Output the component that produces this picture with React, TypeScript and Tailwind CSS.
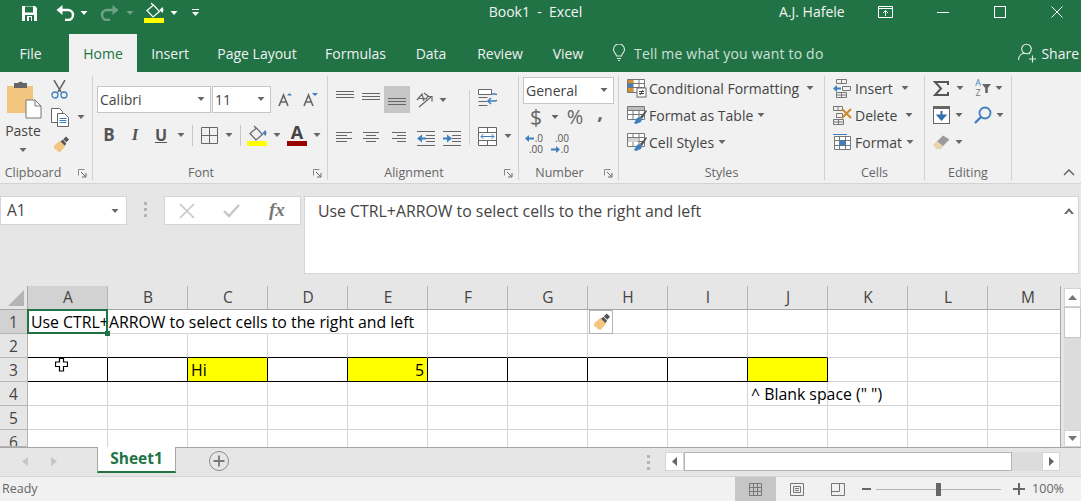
import type { ReactNode } from 'react';

const FONT = "font-['Open_Sans','Noto_Sans',sans-serif]";

function Caret({ light = false, className = '' }: { light?: boolean; className?: string }) {
  return (
    <svg width="8" height="4" viewBox="0 0 8 4" className={`shrink-0 ${className}`}>
      <path d="M0.5 0h7L4 4z" fill={light ? '#ffffff' : '#666666'} />
    </svg>
  );
}

function Launcher() {
  return (
    <svg width="9" height="9" viewBox="0 0 9 9" className="shrink-0">
      <path d="M0.5 0.5h6M0.5 0.5v6" stroke="#8a8a8a" fill="none" />
      <path d="M3 3l4.5 4.5M8 4v4H4" stroke="#666666" fill="none" />
    </svg>
  );
}

function Group({ className, label, launcher = false, labelClass = '', children }: { className: string; label: string; launcher?: boolean; labelClass?: string; children: ReactNode }) {
  return (
    <div className={`mt-[4px] h-[104px] shrink-0 flex flex-col border-r border-[#d0d0d0] ${className}`}>
      <div className="h-[88px] flex">{children}</div>
      <div className="h-[16px] pt-[2px] flex items-center">
        <div className={`flex-1 text-center text-[12.5px] leading-none text-[#666666] ${labelClass}`}>{label}</div>
        {launcher && (
          <div className="w-[16px] mr-[2px] flex justify-center">
            <Launcher />
          </div>
        )}
      </div>
    </div>
  );
}

function Lines({ widths, gap = 3, x = 0 }: { widths: number[]; gap?: number; x?: number }) {
  return (
    <svg width="18" height="16" viewBox="0 0 18 16">
      {widths.map((w, i) => (
        <rect key={i} x={x === 0 ? 0 : x === 1 ? (18 - w) / 2 : 18 - w} y={1 + i * gap} width={w} height="1" fill="#666666" />
      ))}
    </svg>
  );
}

function PaintBucket({ bar, outline = '#ffffff', drop = '#ffffff' }: { bar: string; outline?: string; drop?: string }) {
  return (
    <svg width="20" height="21" viewBox="0 0 20 21">
      <path d="M7 1l2 2M3 8.5L9.5 3l6 6.5-6.5 5.5z" fill="none" stroke={outline} strokeWidth="1.2" />
      <path d="M15.5 8l3-3 1 3-1 3z" fill={drop} />
      <rect x="0" y="16" width="20" height="5" fill={bar} />
    </svg>
  );
}

function Brush({ size = 20 }: { size?: number }) {
  return (
    <svg width={size} height={size} viewBox="0 0 20 20">
      <path d="M2 11l7-6 6 6-6 7-3-1-1-2-2 0z" fill="#f2c67f" />
      <path d="M9.5 6l2.5-2 4 4.5-2 2z" fill="#555555" />
      <path d="M12.5 3.5l3-3 3.5 3.5-3 3z" fill="#555555" />
    </svg>
  );
}

function TableIcon({ children }: { children?: ReactNode }) {
  return (
    <svg width="20" height="20" viewBox="0 0 20 20">
      <path d="M0.5 1.5h17v13h-17zM0.5 5.5h17M0.5 9.5h17M6 1.5v13M12 1.5v13" fill="#ffffff" stroke="#777777" />
      {children}
    </svg>
  );
}

function TitleBar() {
  return (
    <div className="h-[34px] pb-[6px] flex items-center text-white relative">
      <div className="w-[21px]" />
      <svg width="17" height="17" viewBox="0 0 17 17" className="mb-[8px] mt-[6px]">
        <path d="M1 1h13l2 2v13H1z" fill="#ffffff" />
        <rect x="4" y="1.5" width="8" height="6" fill="#217346" />
        <rect x="4" y="10" width="9" height="6" fill="#217346" />
        <rect x="6" y="11" width="5" height="5" fill="#ffffff" />
        <rect x="8" y="12" width="2" height="4" fill="#217346" />
      </svg>
      <svg width="20" height="16" viewBox="0 0 20 16" className="ml-[18px] mb-[2px]">
        <path d="M3 5h9a5 5 0 0 1 0 10h-3" fill="none" stroke="#ffffff" strokeWidth="2.4" />
        <path d="M0.5 5l6-5v10z" fill="#ffffff" />
      </svg>
      <Caret light className="ml-[4px] mb-[2px]" />
      <svg width="20" height="16" viewBox="0 0 20 16" className="ml-[11px] mb-[2px]">
        <path d="M17 5H8a5 5 0 0 0 0 10h3" fill="none" stroke="#6fa288" strokeWidth="2.4" />
        <path d="M19.5 5l-6-5v10z" fill="#6fa288" />
      </svg>
      <svg width="8" height="4" viewBox="0 0 8 4" className="ml-[7px] mb-[2px]">
        <path d="M0.5 0h7L4 4z" fill="#6fa288" />
      </svg>
      <div className="ml-[10px] mb-[3px]">
        <PaintBucket bar="#ffff00" />
      </div>
      <Caret light className="ml-[6px] mb-[3px]" />
      <svg width="7" height="7" viewBox="0 0 7 7" className="ml-[14px] mb-[3px]">
        <path d="M0 0h7v1H0z M0 3h7L3.5 7z" fill="#ffffff" />
      </svg>
      <div className="w-[281px] ml-[196px] mb-[6px] text-center text-[14px] whitespace-pre text-[#f4f4f4] shrink-0">Book1  -  Excel</div>
      <div className="absolute left-[779px] top-[1px] text-[14px] text-[#f4f4f4]">A.J. Hafele</div>
      <div className="absolute left-[878px] top-[6px] flex items-center">
        <svg width="15" height="12" viewBox="0 0 15 12">
          <path d="M0.5 0.5h14v11h-14zM0.5 2.5h14M7.5 10V4.5M5 7l2.5-2.5L10 7" fill="none" stroke="#ffffff" />
        </svg>
        <svg width="12" height="1" viewBox="0 0 12 1" className="ml-[44px]">
          <rect width="12" height="1" fill="#ffffff" />
        </svg>
        <svg width="12" height="12" viewBox="0 0 12 12" className="ml-[45px]">
          <rect x="0.5" y="0.5" width="11" height="11" fill="none" stroke="#ffffff" />
        </svg>
        <svg width="12" height="12" viewBox="0 0 12 12" className="ml-[45px]">
          <path d="M0.5 0.5l11 11M11.5 0.5l-11 11" stroke="#ffffff" fill="none" />
        </svg>
      </div>
    </div>
  );
}

function TabsRow() {
  return (
    <div className="h-[38px] flex text-[14px] text-[#f1f1f1]">
      <div className="w-[61px] text-center pt-[9px]">File</div>
      <div className="w-[68px] ml-[8px] pt-[9px] text-center bg-[#f1f1f1] text-[#217346]">Home</div>
      <div className="w-[66px] text-center pt-[9px]">Insert</div>
      <div className="w-[108px] text-center pt-[9px]">Page Layout</div>
      <div className="w-[89px] text-center pt-[9px]">Formulas</div>
      <div className="w-[62px] text-center pt-[9px]">Data</div>
      <div className="w-[76px] text-center pt-[9px]">Review</div>
      <div className="w-[60px] text-center pt-[9px]">View</div>
      <div className="ml-[14px] pt-[9px] flex items-start">
        <svg width="14" height="18" viewBox="0 0 14 18" className="mt-[1px]">
          <path d="M4.5 12c0-2-3-3.500-3-6.500a5.500 5.500 0 0 1 11 0c0 3-3 4.500-3 6.500zM5 14.500h4M6 16.500h2" fill="none" stroke="#dfeae4" strokeWidth="1.1" />
        </svg>
        <span className="ml-[8px] tracking-[0.2px] text-[#cfe0d6]">Tell me what you want to do</span>
      </div>
      <div className="ml-auto flex items-start pt-[9px] pr-[2px]">
        <svg width="19" height="20" viewBox="0 0 19 20">
          <circle cx="8.500" cy="6" r="4.800" fill="none" stroke="#e8f0eb" strokeWidth="1.1" />
          <path d="M0.500 17c0-4 3-6.500 6-7M11 10.500l1 0.500M11 16h7M14.500 12.500v7" fill="none" stroke="#e8f0eb" strokeWidth="1.1" />
        </svg>
        <span className="ml-[4px]">Share</span>
      </div>
    </div>
  );
}

function ClipboardGroup() {
  return (
    <Group className="w-[93px]" label="Clipboard" launcher labelClass="pr-[8px]">
      <div className="w-[46px] flex flex-col items-center">
        <svg width="36" height="40" viewBox="0 0 36 40" className="mt-[4px] ml-[1px]">
          <path d="M1 6h26v27H1z" fill="#f2c67f" />
          <path d="M8 3h4a3 3 0 0 1 5 0h4v5H8z" fill="#666666" />
          <path d="M20 20h9l6 6v12H20z" fill="#ffffff" stroke="#777777" />
          <path d="M29 20v6h6" fill="none" stroke="#777777" />
        </svg>
        <div className="text-[14px] text-[#444444] mt-[1px] leading-[20px]">Paste</div>
        <Caret className="mt-[7px]" />
      </div>
      <div className="flex flex-col -mt-px">
        <div className="h-[28px] flex items-center pl-[5px]">
          <svg width="17" height="19" viewBox="0 0 17 19">
            <path d="M3 0l7 12M14 0L7 12" stroke="#666666" strokeWidth="1.500" fill="none" />
            <circle cx="4" cy="15" r="3" fill="none" stroke="#3f7fbf" strokeWidth="1.300" />
            <circle cx="13" cy="15" r="3" fill="none" stroke="#3f7fbf" strokeWidth="1.300" />
          </svg>
        </div>
        <div className="h-[28px] flex items-center pl-[5px]">
          <svg width="18" height="19" viewBox="0 0 18 19">
            <path d="M0.500 0.500h8l3 3v11h-11z" fill="#ffffff" stroke="#666666" />
            <path d="M6.500 5.500h7l4 4v9h-11z" fill="#ffffff" stroke="#666666" />
            <path d="M8.500 10.500h7M8.500 12.500h7M8.500 14.500h7" stroke="#3f7fbf" />
          </svg>
          <Caret className="ml-[8px]" />
        </div>
        <div className="h-[28px] flex items-center pl-[6px]">
          <Brush size={18} />
        </div>
      </div>
    </Group>
  );
}

function Combo({ className, text }: { className: string; text: string }) {
  return (
    <div className={`h-[27px] bg-white border border-[#c6c6c6] flex items-center text-[14px] text-[#444444] pl-[2px] pr-[5px] pb-px ${className}`}>
      <span className="flex-1">{text}</span>
      <Caret />
    </div>
  );
}

function FontGroup() {
  return (
    <Group className="w-[235px]" label="Font" launcher>
      <div className="flex flex-col pl-[3px]">
        <div className="flex items-center mt-[10px] h-[27px]">
          <Combo className="w-[114px] ml-[1px]" text="Calibri" />
          <Combo className="w-[59px] ml-[1px]" text="11" />
          <svg width="16" height="14" viewBox="0 0 16 14" className="ml-[7px]">
            <path d="M1 13L5.500 2 10 13M3 9h5" fill="none" stroke="#666666" strokeWidth="1.600" />
            <path d="M9 2.500l2.500-2.500 2.500 2.500z" fill="#3f7fbf" />
          </svg>
          <svg width="16" height="14" viewBox="0 0 16 14" className="ml-[9px]">
            <path d="M1 13L5.500 2 10 13M3 9h5" fill="none" stroke="#666666" strokeWidth="1.600" />
            <path d="M9 0h6l-3 3z" fill="#3f7fbf" />
          </svg>
        </div>
        <div className="flex items-center mt-[11px] h-[22px]">
          <div className="w-[26px] text-center text-[17px] font-bold text-[#555555]">B</div>
          <div className="w-[26px] text-center text-[17px] font-bold italic font-['Liberation_Serif',serif] text-[#555555]">I</div>
          <div className="w-[26px] text-center text-[16px] font-bold underline text-[#555555]">U</div>
          <div className="w-[14px] flex justify-center"><Caret /></div>
          <div className="ml-[4px] w-px h-[21px] bg-[#c6c6c6]" />
          <div className="w-[32px] flex justify-center">
            <svg width="17" height="17" viewBox="0 0 17 17">
              <path d="M0.500 0.500h16v16h-16zM8.500 0.500v16M0.500 8.500h16" fill="none" stroke="#666666" />
            </svg>
          </div>
          <div className="w-[8px] flex justify-center"><Caret /></div>
          <div className="ml-[7px] w-px h-[21px] bg-[#c6c6c6]" />
          <div className="w-[32px] flex justify-center">
            <PaintBucket bar="#ffff00" outline="#666666" drop="#3f7fbf" />
          </div>
          <div className="w-[8px] flex justify-center"><Caret /></div>
          <div className="w-[32px] flex flex-col items-center">
            <div className="text-[18px] font-bold leading-[17px] text-[#444444]">A</div>
            <div className="w-[20px] h-[5px] bg-[#990000]" />
          </div>
          <div className="w-[8px] flex justify-center"><Caret /></div>
        </div>
      </div>
    </Group>
  );
}

function AlignmentGroup() {
  return (
    <Group className="w-[191px]" label="Alignment" launcher>
      <div className="w-[141px] pl-[4px] flex flex-col">
        <div className="flex items-center mt-[10px] h-[27px]">
          <div className="w-[26px] h-[27px] flex justify-center items-start pt-[4px]"><Lines widths={[18, 18, 18]} /></div>
          <div className="w-[26px] h-[27px] flex justify-center items-center pt-[1px]"><Lines widths={[18, 18, 18]} /></div>
          <div className="w-[26px] h-[27px] flex justify-center items-end bg-[#c6c6c6]"><Lines widths={[18, 18, 18]} /></div>
          <div className="w-[30px] flex justify-center">
            <svg width="20" height="18" viewBox="0 0 20 18">
              <path d="M2 9l5-6 2 7M4 7l4 1M9 2l4 3-2 3-3-1" fill="none" stroke="#666666" strokeWidth="1.200" />
              <path d="M4 16L16 6M12 5.500h5v5" fill="none" stroke="#666666" strokeWidth="1.200" />
            </svg>
          </div>
          <div className="w-[6px] flex justify-center"><Caret /></div>
        </div>
        <div className="flex items-center mt-[13px] h-[26px]">
          <div className="w-[26px] flex justify-center"><Lines widths={[16, 11, 16, 11]} /></div>
          <div className="w-[26px] flex justify-center"><Lines widths={[16, 10, 16, 10]} x={1} /></div>
          <div className="w-[26px] flex justify-center"><Lines widths={[14, 9, 14, 9]} x={2} /></div>
          <div className="ml-[3px] w-[26px] flex justify-center">
            <svg width="18" height="16" viewBox="0 0 18 16">
              <path d="M0 7.500l5-4v8z" fill="#3f7fbf" />
              <rect x="5" y="6.500" width="4" height="2" fill="#3f7fbf" />
              <path d="M0 0.500h18M9 4.500h9M9 7.500h9M9 10.500h9M0 14.500h18" stroke="#666666" />
            </svg>
          </div>
          <div className="w-[26px] flex justify-center">
            <svg width="18" height="16" viewBox="0 0 18 16">
              <path d="M9 7.500l-5-4v8z" fill="#3f7fbf" />
              <rect x="0" y="6.500" width="5" height="2" fill="#3f7fbf" />
              <path d="M0 0.500h18M9 4.500h9M9 7.500h9M9 10.500h9M0 14.500h18" stroke="#666666" />
            </svg>
          </div>
        </div>
      </div>
      <div className="mt-[14px] w-px h-[55px] bg-[#d0d0d0]" />
      <div className="flex flex-col">
        <div className="mt-[13px] h-[20px] w-[34px] flex justify-center">
          <svg width="19" height="19" viewBox="0 0 19 19">
            <path d="M0.500 0.500h13v5h-13z" fill="#ffffff" stroke="#666666" />
            <path d="M0.500 8.500h9M0.500 12.500h9M0.500 16.500h9" stroke="#666666" />
            <path d="M13 5h4a1.500 1.500 0 0 1 0 7h-6M13 9l-3 3 3 3" fill="none" stroke="#3f7fbf" strokeWidth="1.500" />
          </svg>
        </div>
        <div className="mt-[17px] h-[20px] flex items-center">
          <div className="w-[34px] flex justify-center">
            <svg width="19" height="19" viewBox="0 0 19 19">
              <path d="M0.500 0.500h18v18h-18zM0.500 5.500h18M0.500 13.500h18M9.500 0.500v5M9.500 13.500v5" fill="#ffffff" stroke="#666666" />
              <path d="M3 9.500h13M5.500 7l-2.500 2.500L5.500 12M13.500 7l2.500 2.500L13.500 12" fill="none" stroke="#3f7fbf" />
            </svg>
          </div>
          <Caret />
        </div>
      </div>
    </Group>
  );
}

function NumberGroup() {
  return (
    <Group className="w-[100px]" label="Number" launcher>
      <div className="pl-[4px] flex flex-col">
        <Combo className="w-[91px] mt-[1px]" text="General" />
        <div className="flex items-center h-[26px] text-[#666666]">
          <div className="w-[26px] text-center text-[21px] leading-none">$</div>
          <div className="w-[12px] flex justify-center"><Caret /></div>
          <div className="w-[28px] text-center text-[20px] leading-none">%</div>
          <div className="w-[22px] text-center text-[20px] font-bold leading-none -mt-[10px]">,</div>
        </div>
        <div className="flex items-center mt-[1px] h-[26px] text-[10px] leading-[11px] text-[#555555]">
          <div className="w-[26px] flex flex-col items-end pr-[6px]">
            <div className="flex items-center">
              <svg width="9" height="7" viewBox="0 0 9 7" className="mr-px">
                <path d="M0 3.500L4 0v7z" fill="#3f7fbf" />
                <rect x="4" y="2.500" width="5" height="2" fill="#3f7fbf" />
              </svg>
              <span>.0</span>
            </div>
            <span>.00</span>
          </div>
          <div className="w-[26px] flex flex-col items-end pr-[6px]">
            <span>.00</span>
            <div className="flex items-center">
              <svg width="9" height="7" viewBox="0 0 9 7" className="mr-px">
                <path d="M9 3.500L5 0v7z" fill="#3f7fbf" />
                <rect x="0" y="2.500" width="5" height="2" fill="#3f7fbf" />
              </svg>
              <span>.0</span>
            </div>
          </div>
        </div>
      </div>
    </Group>
  );
}

function RibbonRow({ icon, label, caretClass, iconClass }: { icon: ReactNode; label: string; caretClass: string; iconClass: string }) {
  return (
    <div className="h-[26px] flex items-center text-[14px] text-[#444444] whitespace-nowrap">
      <div className={iconClass}>{icon}</div>
      <span className="ml-[3px]">{label}</span>
      <Caret className={caretClass} />
    </div>
  );
}

function StylesGroup() {
  return (
    <Group className="w-[206px]" label="Styles">
      <div className="flex flex-col gap-px -mt-px">
        <RibbonRow
          iconClass="ml-[8px] w-[19px] h-[20px]"
          caretClass="ml-[7px]"
          label="Conditional Formatting"
          icon={
            <TableIcon>
              <rect x="1" y="2" width="5" height="3" fill="#d98f2b" />
              <rect x="1" y="6" width="5" height="3" fill="#3f7fbf" />
              <rect x="1" y="10" width="5" height="4" fill="#d98f2b" />
              <rect x="10" y="10" width="9" height="9" fill="#ffffff" stroke="#666666" />
              <path d="M12 13.500h5M12 15.500h5M16 12l-3 5" stroke="#444444" fill="none" />
            </TableIcon>
          }
        />
        <RibbonRow
          iconClass="ml-[8px] w-[19px] h-[20px]"
          caretClass="ml-[4px]"
          label="Format as Table"
          icon={
            <TableIcon>
              <path d="M1 2h16v3H1z" fill="#bdbdbd" />
              <path d="M7 18l3-5 3-1 2 2-1 3-5 2z" fill="#3f7fbf" />
              <path d="M13 12l6-7 1 1-5 8z" fill="#555555" />
            </TableIcon>
          }
        />
        <RibbonRow
          iconClass="ml-[8px] w-[19px] h-[20px]"
          caretClass="ml-[4px]"
          label="Cell Styles"
          icon={
            <TableIcon>
              <path d="M1 6h10v4H1z" fill="#d5d5d5" />
              <path d="M7 18l3-5 3-1 2 2-1 3-5 2z" fill="#3f7fbf" />
              <path d="M13 12l6-7 1 1-5 8z" fill="#555555" />
            </TableIcon>
          }
        />
      </div>
    </Group>
  );
}

function CellsGroup() {
  return (
    <Group className="w-[100px]" label="Cells">
      <div className="flex flex-col gap-px -mt-px">
        <RibbonRow
          iconClass="ml-[8px] w-[19px] h-[19px]"
          caretClass="ml-[8px]"
          label="Insert"
          icon={
            <svg width="19" height="19" viewBox="0 0 19 19">
              <path d="M3.500 0.500h10v4h-10zM8.500 0.500v4M3.500 13.500h10v5h-10zM3.500 16h10M8.500 13.500v5M9.500 7.500h8v4h-8z" fill="none" stroke="#777777" />
              <path d="M0 9.500l4-3.500v7z" fill="#3f7fbf" />
              <rect x="3" y="8.500" width="5" height="2" fill="#3f7fbf" />
            </svg>
          }
        />
        <RibbonRow
          iconClass="ml-[8px] w-[19px] h-[19px]"
          caretClass="ml-[8px]"
          label="Delete"
          icon={
            <svg width="19" height="19" viewBox="0 0 19 19">
              <path d="M0.500 0.500h9v4h-9zM5 0.500v4M0.500 13.500h10v5h-10zM0.500 16h10M5.500 13.500v5M3.500 7.500h6v4h-6z" fill="none" stroke="#777777" />
              <path d="M9 3l9 9M18 3l-9 9" stroke="#c98a2e" strokeWidth="2" />
            </svg>
          }
        />
        <RibbonRow
          iconClass="ml-[8px] w-[19px] h-[19px]"
          caretClass="ml-[4px]"
          label="Format"
          icon={
            <svg width="19" height="19" viewBox="0 0 19 19">
              <path d="M0 1.500h14" stroke="#3f7fbf" />
              <path d="M1.500 3.500h16v13h-16zM1.500 7.500h16M1.500 12.500h16M6.500 3.500v13M12.500 3.500v13" fill="#ffffff" stroke="#777777" />
              <rect x="6.500" y="7.500" width="6" height="5" fill="#3f7fbf" />
            </svg>
          }
        />
      </div>
    </Group>
  );
}

function EditingGroup() {
  return (
    <Group className="w-[87px]" label="Editing">
      <div className="flex flex-col pl-[8px] gap-px -mt-px">
        <div className="h-[26px] flex items-center">
          <div className="w-[18px] text-center text-[#555555]">
            <svg width="16" height="15" viewBox="0 0 16 15">
              <path d="M15 4V1H2l6 6.500L2 14h13v-3" fill="none" stroke="#555555" strokeWidth="2" />
            </svg>
          </div>
          <Caret className="ml-[5px]" />
          <div className="ml-[10px] w-[8px] flex flex-col items-center text-[9px] leading-[10px]">
            <span className="text-[#3f7fbf]">A</span>
            <span className="text-[#777777]">Z</span>
          </div>
          <svg width="9" height="11" viewBox="0 0 9 11">
            <path d="M0 1h9L5.800 5v5h-2.600V5z" fill="#666666" />
          </svg>
          <Caret className="ml-[4px]" />
        </div>
        <div className="h-[26px] flex items-center">
          <svg width="17" height="18" viewBox="0 0 17 18">
            <rect x="0.500" y="0.500" width="16" height="17" fill="#ffffff" stroke="#666666" />
            <rect x="0" y="0" width="17" height="3" fill="#666666" />
            <path d="M8.500 5v7M5 9.500l3.500 4 3.500-4z" stroke="#2f6fb0" strokeWidth="2" fill="#2f6fb0" />
          </svg>
          <Caret className="ml-[5px]" />
          <svg width="18" height="18" viewBox="0 0 18 18" className="ml-[11px]">
            <circle cx="11" cy="7" r="5.500" fill="none" stroke="#3f7fbf" strokeWidth="1.800" />
            <path d="M1 17l6-6" stroke="#3f7fbf" strokeWidth="2.400" />
          </svg>
          <Caret className="ml-[4px]" />
        </div>
        <div className="h-[26px] flex items-center">
          <svg width="17" height="16" viewBox="0 0 17 16">
            <path d="M0.500 11L10 1.500l6.500 4L7 15H4z" fill="#9a9a9a" />
            <path d="M0.500 11L4 7l6 5-3 3H4z" fill="#e9d6a8" />
          </svg>
          <Caret className="ml-[5px]" />
        </div>
      </div>
    </Group>
  );
}

function Ribbon() {
  return (
    <div className="h-[112px] bg-[#f1f1f1] border-b border-[#d4d4d4] flex relative">
      <ClipboardGroup />
      <FontGroup />
      <AlignmentGroup />
      <NumberGroup />
      <StylesGroup />
      <CellsGroup />
      <EditingGroup />
      <svg width="12" height="7" viewBox="0 0 12 7" className="absolute left-[1063px] top-[97px]">
        <path d="M1 6l5-5 5 5" fill="none" stroke="#666666" strokeWidth="1.500" />
      </svg>
    </div>
  );
}

function FormulaBar() {
  return (
    <div className="h-[102px] bg-[#e6e6e6] pt-[12px] flex items-start">
      <div className="w-[127px] h-[29px] bg-white border border-[#d4d4d4] flex items-center pl-[6px] pr-[7px] text-[15.5px] text-[#444444]">
        <span className="flex-1">A1</span>
        <Caret />
      </div>
      <div className="w-[37px] h-[29px] flex flex-col justify-center items-center gap-[3px] pr-[1px] pb-[2px]">
        <div className="w-[3px] h-[3px] bg-[#b4b4b4]" />
        <div className="w-[3px] h-[3px] bg-[#b4b4b4]" />
        <div className="w-[3px] h-[3px] bg-[#b4b4b4]" />
      </div>
      <div className="w-[137px] h-[29px] bg-white border border-[#d4d4d4] flex items-center">
        <svg width="16" height="16" viewBox="0 0 16 16" className="ml-[14px]">
          <path d="M1 1l14 14M15 1L1 15" stroke="#c6c6c6" strokeWidth="1.600" fill="none" />
        </svg>
        <svg width="17" height="14" viewBox="0 0 17 14" className="ml-[28px]">
          <path d="M1 7l5 5L16 1" stroke="#c6c6c6" strokeWidth="2.400" fill="none" />
        </svg>
        <span className="ml-[29px] font-['Liberation_Serif',serif] italic font-bold text-[19px] text-[#777777]">fx</span>
      </div>
      <div className="ml-[3px] w-[775px] h-[78px] bg-white border border-[#d4d4d4] pl-[13px] pr-[4px] pt-[3px] flex items-start justify-between text-[15.85px] text-[#444444]">
        <span>Use CTRL+ARROW to select cells to the right and left</span>
        <svg width="10" height="6" viewBox="0 0 10 6" className="mt-[8px]">
          <path d="M0 6l5-6 5 6H7.500L5 3 2.500 6z" fill="#666666" />
        </svg>
      </div>
    </div>
  );
}

const COLS = ['A', 'B', 'C', 'D', 'E', 'F', 'G', 'H', 'I', 'J', 'K', 'L', 'M'];
const ROWS = [1, 2, 3, 4, 5, 6];

function Cell({ row, col }: { row: number; col: string }) {
  const idx = COLS.indexOf(col);
  const boxed = row === 3 && idx < 10;
  const yellow = row === 3 && (col === 'C' || col === 'E' || col === 'J');
  return (
    <div
      className={`relative text-[15.85px] leading-[25px] whitespace-nowrap text-black border-r ${row === 1 && idx < 4 ? 'border-r-transparent' : ''} ${boxed ? 'border-r-black border-b border-b-black' : 'border-[#d4d4d4] border-b'} ${row === 2 && idx < 10 ? 'border-b-black' : ''} ${row === 6 ? 'border-b-0' : ''} ${yellow ? 'bg-[#ffff00]' : 'bg-white'}`}
    >
      {row === 1 && col === 'A' && (
        <>
          <span className="absolute left-[3px] top-0 z-10">Use CTRL+ARROW to select cells to the right and left</span>
          <div className="absolute -left-px -top-px w-[81px] h-[25px] border-2 border-[#217346] z-20" />
          <div className="absolute left-[77px] top-[21px] w-[5px] h-[5px] bg-[#217346] z-30" />
        </>
      )}
      {row === 1 && col === 'H' && (
        <div className="absolute left-[1px] top-0 w-[24px] h-[24px] bg-white border border-[#b4b4b4] flex items-center justify-center z-10">
          <Brush size={19} />
        </div>
      )}
      {row === 3 && col === 'A' && (
        <svg width="13" height="14" viewBox="0 0 13 14" className="absolute left-[27px] top-[0px] z-10">
          <path d="M4.500 0.500h4v3.500h4v4.500h-4v4.500h-4V8.500h-4V4h4z" fill="#ffffff" stroke="#000000" strokeWidth="1.200" />
        </svg>
      )}
      {row === 3 && col === 'C' && <span className="pl-[3px]">Hi</span>}
      {row === 3 && col === 'E' && <span className="absolute right-[3px] top-0">5</span>}
      {row === 4 && col === 'J' && <span className="absolute left-[3px] top-0 z-10">^ Blank space (" ")</span>}
    </div>
  );
}

function Sheet() {
  return (
    <div className="h-[161px] flex">
      <div className="w-[1061px] overflow-hidden border-r border-[#a6a6a6] grid grid-cols-[28px_repeat(13,80px)] grid-rows-[24px_24px_24px_24px_24px_24px_17px]">
        <div className="bg-[#e6e6e6] border-r border-b border-[#a6a6a6] flex items-end justify-end pr-[3px] pb-[3px]">
          <svg width="16" height="16" viewBox="0 0 16 16">
            <path d="M16 0v16H0z" fill="#b4b4b4" />
          </svg>
        </div>
        {COLS.map((c) => (
          <div key={c} className={`border-b border-[#a6a6a6] flex items-center justify-center relative text-[15.5px] text-[#444444] ${c === 'A' ? 'bg-[#d2d2d2] border-b-[#217346]' : 'bg-[#e6e6e6]'}`}>
            {c}
            <div className="absolute right-0 top-0 w-px h-full bg-[#b4b4b4]" />
          </div>
        ))}
        {ROWS.map((r) => (
          <div key={r} className="contents">
            <div className={`border-r border-b flex items-start justify-center text-[15.5px] leading-[24px] overflow-hidden text-[#444444] border-[#b4b4b4] ${r === 1 ? 'bg-[#d2d2d2]' : 'bg-[#e6e6e6]'}`}>{r}</div>
            {COLS.map((c) => (
              <Cell key={c} row={r} col={c} />
            ))}
          </div>
        ))}
      </div>
      <div className="w-[20px] bg-[#e6e6e6] pl-[3px] flex flex-col">
        <div className="mt-[2px] h-[19px] bg-white border border-[#d4d4d4] flex items-center justify-center">
          <svg width="9" height="5" viewBox="0 0 9 5"><path d="M4.500 0L9 5H0z" fill="#777777" /></svg>
        </div>
        <div className="h-[31px] bg-white border border-[#c6c6c6]" />
        <div className="flex-1 bg-[#dcdcdc]" />
        <div className="h-[17px] bg-white border border-[#d4d4d4] flex items-center justify-center">
          <svg width="9" height="5" viewBox="0 0 9 5"><path d="M4.500 5L9 0H0z" fill="#777777" /></svg>
        </div>
      </div>
    </div>
  );
}

function SheetTabs() {
  return (
    <div className="h-[30px] bg-[#e6e6e6] border-t border-[#a6a6a6] border-b-[#d4d4d4] border-b flex items-start">
      <svg width="6" height="9" viewBox="0 0 6 9" className="ml-[22px] mt-[9px]"><path d="M6 0v9L0 4.500z" fill="#c6c6c6" /></svg>
      <svg width="6" height="9" viewBox="0 0 6 9" className="ml-[23px] mt-[9px]"><path d="M0 0v9l6-4.500z" fill="#c6c6c6" /></svg>
      <div className="ml-[40px] w-[79px] h-[26px] -mt-px bg-white border-x border-[#a6a6a6] border-b-2 border-b-[#217346] flex items-center justify-center text-[15.5px] font-bold text-[#217346]">Sheet1</div>
      <svg width="20" height="20" viewBox="0 0 20 20" className="ml-[33px] mt-[3px]">
        <circle cx="10" cy="10" r="9.500" fill="none" stroke="#8a8a8a" />
        <path d="M10 4.500v11M4.500 10h11" stroke="#777777" strokeWidth="1.800" />
      </svg>
      <div className="ml-[418px] mt-[7px] flex flex-col gap-[3px]">
        <div className="w-[3px] h-[3px] bg-[#b4b4b4]" />
        <div className="w-[3px] h-[3px] bg-[#b4b4b4]" />
        <div className="w-[3px] h-[3px] bg-[#b4b4b4]" />
      </div>
      <div className="ml-[15px] mt-[4px] w-[395px] h-[19px] flex">
        <div className="w-[19px] bg-white border border-[#d4d4d4] flex items-center justify-center">
          <svg width="5" height="9" viewBox="0 0 5 9"><path d="M5 0v9L0 4.500z" fill="#666666" /></svg>
        </div>
        <div className="w-[328px] bg-white border border-[#b4b4b4]" />
        <div className="w-[30px] bg-[#dcdcdc]" />
        <div className="w-[18px] bg-white border border-[#d4d4d4] flex items-center justify-center">
          <svg width="5" height="9" viewBox="0 0 5 9"><path d="M0 0v9l5-4.500z" fill="#666666" /></svg>
        </div>
      </div>
    </div>
  );
}

function StatusBar() {
  return (
    <div className="h-[24px] bg-[#f1f1f1] flex items-center text-[12.5px] text-[#666666]">
      <span className="ml-[2px] pt-px">Ready</span>
      <div className="ml-auto w-[41px] h-[24px] bg-[#c6c6c6] flex items-center justify-center">
        <svg width="13" height="13" viewBox="0 0 13 13">
          <path d="M0.500 0.500h12v12h-12zM4.500 0.500v12M8.500 0.500v12M0.500 4.500h12M0.500 8.500h12" fill="none" stroke="#777777" />
        </svg>
      </div>
      <div className="w-[41px] flex justify-center">
        <svg width="14" height="13" viewBox="0 0 14 13">
          <path d="M0.500 0.500h13v12h-13zM3.500 3.500h7v6h-7zM5 5.500h4M5 7.500h4" fill="none" stroke="#777777" />
        </svg>
      </div>
      <div className="w-[41px] flex justify-center">
        <svg width="14" height="13" viewBox="0 0 14 13">
          <path d="M0.500 0.500h13v12h-13zM0.500 8.500H8.500V0.500" fill="none" stroke="#777777" />
        </svg>
      </div>
      <svg width="9" height="2" viewBox="0 0 9 2" className="ml-[4px]"><rect width="9" height="2" fill="#666666" /></svg>
      <div className="ml-[5px] w-[125px] h-px bg-[#b4b4b4] flex items-center justify-center">
        <div className="w-[5px] h-[13px] bg-[#666666]" />
      </div>
      <svg width="12" height="12" viewBox="0 0 12 12" className="ml-[12px]">
        <path d="M0 6h12M6 0v12" stroke="#666666" strokeWidth="2" />
      </svg>
      <span className="w-[56px] pr-[10px] pt-px text-center">100%</span>
    </div>
  );
}

export default function App() {
  return (
    <div className={`w-[1081px] h-[501px] overflow-hidden ${FONT}`}>
      <div className="bg-[#217346]">
        <TitleBar />
        <TabsRow />
      </div>
      <Ribbon />
      <FormulaBar />
      <Sheet />
      <SheetTabs />
      <StatusBar />
    </div>
  );
}
